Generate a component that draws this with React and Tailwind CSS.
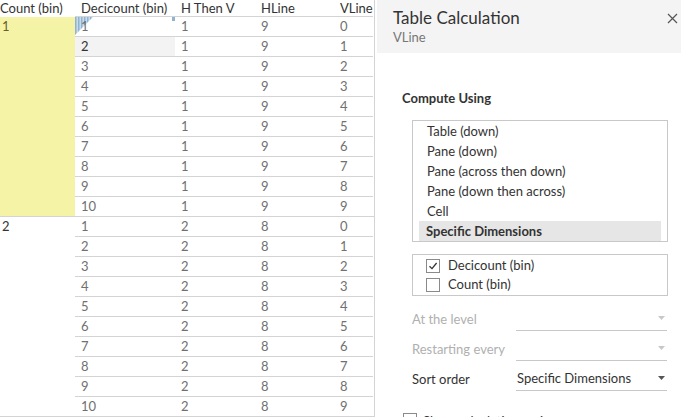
import React from "react";

const groups = [
  { count: "1", hthenv: "1", hline: "9", yellow: true },
  { count: "2", hthenv: "2", hline: "8", yellow: false },
];

const font = { fontFamily: "Lato, 'Liberation Sans', sans-serif" };

const DataRow = ({ deci, hthenv, hline, vline, hover, marked }) => (
  <div className="flex h-5 border-b border-[#d4d4d4] text-[13px] leading-[19px] text-[#707070]">
    <div
      className={
        "relative w-[100px] pl-[6px] " + (hover ? "bg-[#f3f3f3] text-[#333]" : "")
      }
    >
      {marked && (
        <>
          <svg className="absolute left-0 top-0" width="18" height="18" viewBox="0 0 18 18">
            <defs>
              <pattern id="hatch" width="3" height="3" patternUnits="userSpaceOnUse">
                <rect width="3" height="3" fill="#c9dbea" />
                <rect width="1.5" height="3" fill="#8fb3d3" />
              </pattern>
            </defs>
            <polygon points="0,0 18,0 0,18" fill="url(#hatch)" />
          </svg>
          <div className="absolute right-0 top-0 h-[4px] w-[3px] bg-[#8fb3d3]" />
        </>
      )}
      <span className="relative">{deci}</span>
    </div>
    <div className="w-[80px] pl-[6px]">{hthenv}</div>
    <div className="w-[79px] pl-[6px]">{hline}</div>
    <div className="w-[39px] pl-[6px]">{vline}</div>
  </div>
);

const Group = ({ count, hthenv, hline, yellow, first }) => (
  <div className="flex border-b border-[#d4d4d4]">
    <div
      className={
        "w-[75px] pl-[2px] text-[13px] leading-[19px] " +
        (yellow ? "bg-[#f5f3a6] text-[#6b5e2e]" : "text-[#333]")
      }
    >
      {count}
    </div>
    <div className="flex flex-col">
      {Array.from({ length: 10 }, (_, i) => (
        <div key={i} className={i === 9 ? "-mb-px" : ""}>
          <DataRow
            deci={String(i + 1)}
            hthenv={hthenv}
            hline={hline}
            vline={String(i)}
            hover={first && i === 1}
            marked={first && i === 0}
          />
        </div>
      ))}
    </div>
  </div>
);

const Dropdown = ({ label, value, disabled }) => (
  <div className="flex h-[30px] items-end">
    <div
      className={
        "w-[104px] pb-[2px] text-[13px] " + (disabled ? "text-[#b0b0b0]" : "text-[#333]")
      }
    >
      {label}
    </div>
    <div className="flex w-[151px] items-center justify-between border-b border-[#c8c8c8] pb-[2px] pl-[1px] pr-[2px] text-[13px] text-[#333]">
      <span className="h-[20px] leading-[20px]">{value}</span>
      <svg width="7" height="4" viewBox="0 0 7 4">
        <polygon points="0,0 7,0 3.5,4" fill={disabled ? "#c8c8c8" : "#555"} />
      </svg>
    </div>
  </div>
);

const Check = ({ label, checked }) => (
  <div className="flex h-[19px] items-center">
    <div className="ml-[13px] flex h-[14px] w-[14px] items-center justify-center border border-[#8a8a8a] bg-white">
      {checked && (
        <svg width="10" height="10" viewBox="0 0 10 10">
          <path d="M1.5 5.2 L4 7.6 L8.6 2" stroke="#333" strokeWidth="1.3" fill="none" />
        </svg>
      )}
    </div>
    <span className="ml-[8px] text-[13px] text-[#333]">{label}</span>
  </div>
);

export default function App() {
  const options = [
    "Table (down)",
    "Pane (down)",
    "Pane (across then down)",
    "Pane (down then across)",
    "Cell",
  ];

  return (
    <div className="flex h-[417px] w-[681px] overflow-hidden bg-white" style={font}>
      {/* data table */}
      <div className="w-[375px] shrink-0 border-r border-[#d4d4d4]">
        <div className="flex h-[17px] text-[13px] leading-[16px] text-[#333]">
          <div className="w-[75px]">Count (bin)</div>
          <div className="flex border-b border-[#d4d4d4]">
            <div className="w-[100px] pl-[6px]">Decicount (bin)</div>
            <div className="w-[80px] pl-[6px]">H Then V</div>
            <div className="w-[79px] pl-[6px]">HLine</div>
            <div className="w-[39px] pl-[6px]">VLine</div>
          </div>
        </div>
        {groups.map((g, i) => (
          <Group key={g.count} {...g} first={i === 0} />
        ))}
      </div>

      {/* table calculation panel */}
      <div className="ml-[2px] flex flex-1 flex-col overflow-hidden">
        <div className="flex h-[53px] shrink-0 justify-between bg-[#f4f4f4] pl-4 pr-[3px]">
          <div className="pt-[7px]">
            <div className="text-[17px] leading-[22px] text-[#333]">Table Calculation</div>
            <div className="text-[13px] leading-[16px] text-[#777]">VLine</div>
          </div>
          <svg className="mt-[13px]" width="11" height="11" viewBox="0 0 11 11">
            <path d="M1 1 L10 10 M10 1 L1 10" stroke="#555" strokeWidth="1.2" />
          </svg>
        </div>

        <div className="shrink-0 pl-[25px] pt-[36px]">
          <div className="text-[13px] font-bold leading-[18px] text-[#333]">Compute Using</div>
        </div>

        <div className="ml-[35px] mt-[13px] w-[256px] shrink-0 border border-[#c8c8c8]">
          {options.map((o) => (
            <div key={o} className="h-5 pl-[14px] text-[13px] leading-5 text-[#333]">
              {o}
            </div>
          ))}
          <div className="mx-[6px] h-5 bg-[#e6e6e6] pl-[7px] text-[13px] font-bold leading-5 text-[#333]">
            Specific Dimensions
          </div>
        </div>

        <div className="ml-[35px] mt-[12px] w-[256px] shrink-0 border border-[#c8c8c8] py-[1px]">
          <Check label="Decicount (bin)" checked />
          <Check label="Count (bin)" />
        </div>

        <div className="ml-[35px] mt-[5px] w-[256px] shrink-0">
          <Dropdown label="At the level" value="" disabled />
          <Dropdown label="Restarting every" value="" disabled />
          <Dropdown label="Sort order" value="Specific Dimensions" />
        </div>

        <div className="ml-[26px] mt-[22px] flex shrink-0 items-start">
          <div className="h-[14px] w-[14px] border border-[#8a8a8a]" />
          <span className="ml-[6px] text-[13px] leading-[16px] text-[#333]">
            Show calculation assistance
          </span>
        </div>
      </div>
    </div>
  );
}
